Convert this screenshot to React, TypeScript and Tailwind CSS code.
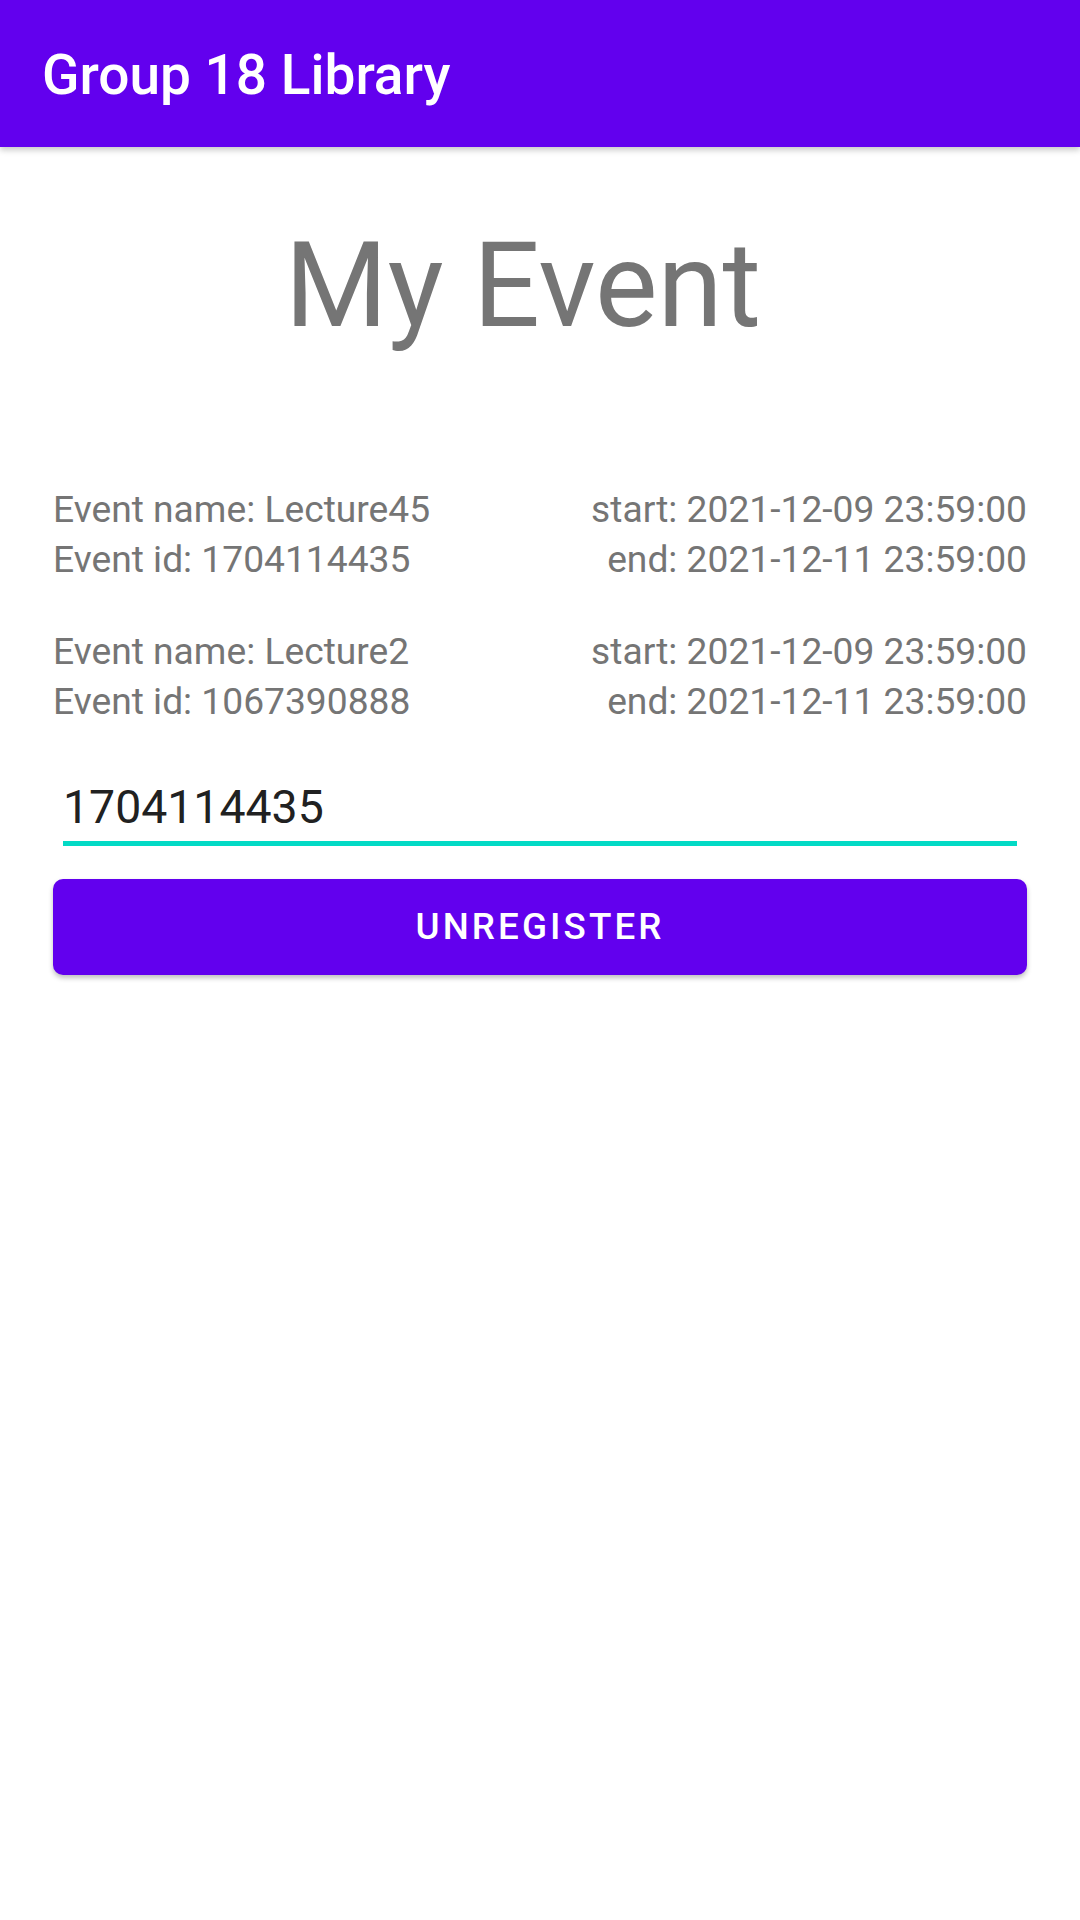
import React, { useState } from "react";

// --- Data ---

type EventItem = {
  name: string;
  id: string;
  start: string;
  end: string;
};

const EVENTS: EventItem[] = [
  {
    name: "Lecture45",
    id: "1704114435",
    start: "2021-12-09 23:59:00",
    end: "2021-12-11 23:59:00",
  },
  {
    name: "Lecture2",
    id: "1067390888",
    start: "2021-12-09 23:59:00",
    end: "2021-12-11 23:59:00",
  },
];

// --- Component ---

export default function App() {
  const [eventId, setEventId] = useState("1704114435");

  return (
    <div
      className="min-h-[1920px] w-[1080px] bg-white"
      style={{ fontFamily: "Roboto, 'Noto Sans', sans-serif" }}
    >
      {/* App bar */}
      <header className="relative z-10 flex h-[147px] items-center bg-[#6200EE] px-[42px] pt-[3px] shadow-[0_3px_6px_rgba(0,0,0,0.22)]">
        <h1 className="text-[55px] leading-[64px] font-medium text-white">
          Group 18 Library
        </h1>
      </header>

      <main className="flex flex-col px-[53px]">
        {/* Title */}
        <h2 className="mt-[70px] pr-[34px] text-center text-[118px] leading-[138px] text-[#757575]">
          My Event
        </h2>

        {/* Event list */}
        <div className="mt-[129px] flex flex-col gap-[42px]">
          {EVENTS.map((ev) => (
            <div
              key={ev.id}
              className="flex justify-between text-[37.2px] leading-[50px] text-[#757575]"
            >
              <div className="flex flex-col">
                <span>Event name: {ev.name}</span>
                <span>Event id: {ev.id}</span>
              </div>
              <div className="flex flex-col items-end">
                <span>start: {ev.start}</span>
                <span>end: {ev.end}</span>
              </div>
            </div>
          ))}
        </div>

        {/* Event id input */}
        <div className="mx-[10px] mt-[51px] border-b-[5px] border-[#03DAC5] pt-[2px] pb-[6px]">
          <input
            type="text"
            value={eventId}
            onChange={(e) => setEventId(e.target.value)}
            className="block h-[56px] w-full bg-transparent text-[46.4px] leading-[56px] text-[#212121] outline-none"
          />
        </div>

        {/* Unregister */}
        <button
          type="button"
          className="mt-[33px] h-[96px] w-full rounded-[10px] bg-[#6200EE] text-[36.75px] font-medium tracking-[3.1px] text-white uppercase shadow-[0_3px_5px_rgba(0,0,0,0.25)]"
        >
          Unregister
        </button>
      </main>
    </div>
  );
}
